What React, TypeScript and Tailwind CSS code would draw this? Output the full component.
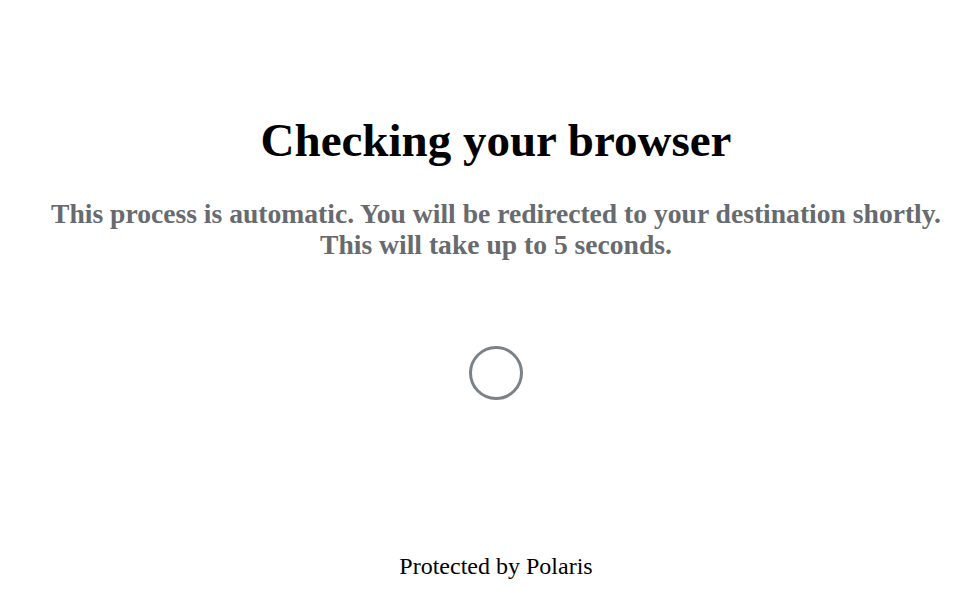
export default function App() {
  return (
    <div
      className="flex h-[603px] flex-col items-center bg-white pl-[17px] text-center"
      style={{ fontFamily: '"Liberation Serif", "Times New Roman", serif' }}
    >
      <h1 className="mt-[112px] text-[47px] font-bold leading-[56px] text-black">
        Checking your browser
      </h1>
      <p className="mt-[30px] text-[27.6px] font-bold leading-[31px] text-[#676a6e]">
        This process is automatic. You will be redirected to your destination shortly.
        <br />
        This will take up to 5 seconds.
      </p>
      <div className="mt-[86px] h-[54px] w-[54px] rounded-full border-[3px] border-[#7b8287]" />
      <div className="mt-auto mb-[23px] text-[24px] leading-[28px] text-black">
        Protected by Polaris
      </div>
    </div>
  );
}
